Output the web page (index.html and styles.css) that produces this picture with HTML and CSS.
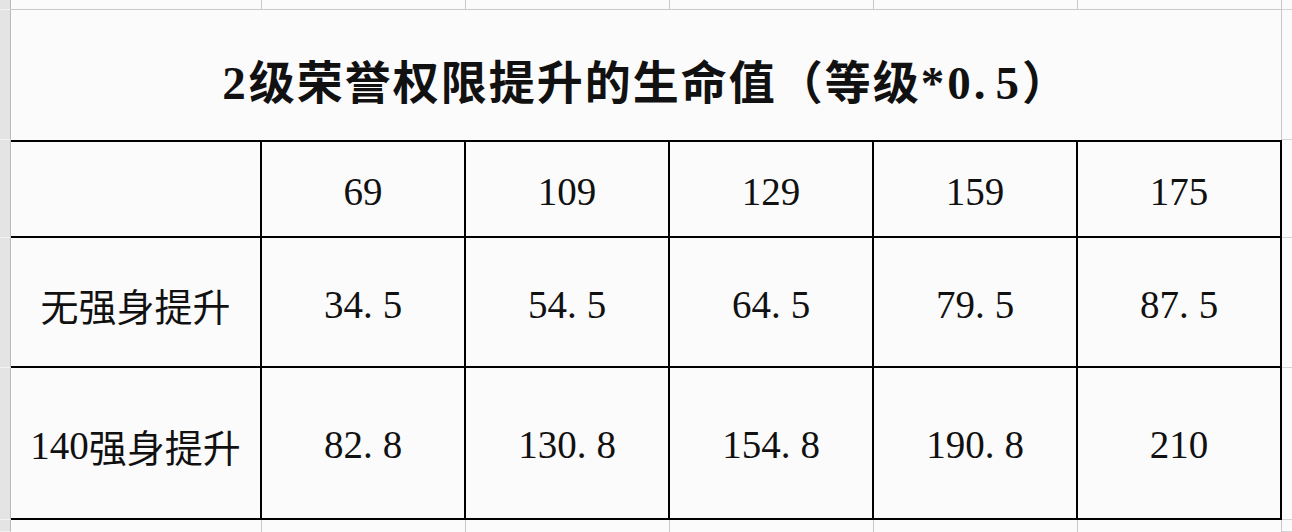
FILE: index.html
```html
<!DOCTYPE html>
<html lang="zh">
<head>
<meta charset="utf-8">
<title>2级荣誉权限提升的生命值</title>
<link rel="stylesheet" href="styles.css">
</head>
<body>
<div class="sheet">
  <!-- top partial row -->
  <div class="hdr edge-top"></div>
  <div class="cell top"></div>
  <div class="cell top"></div>
  <div class="cell top"></div>
  <div class="cell top"></div>
  <div class="cell top"></div>
  <div class="cell top"></div>
  <div class="cell top extra"></div>

  <!-- title row -->
  <div class="hdr"></div>
  <div class="cell title"><span class="cjk"><span class="tlat">2</span>级荣誉权限提升的生命值（等级<span class="tlat">*0<span class="dot">.</span>5</span>）</span></div>
  <div class="cell extra"></div>

  <!-- header numbers -->
  <div class="hdr"></div>
  <div class="cell box hrow first"></div>
  <div class="cell box hrow num">69</div>
  <div class="cell box hrow num">109</div>
  <div class="cell box hrow num">129</div>
  <div class="cell box hrow num">159</div>
  <div class="cell box hrow num">175</div>
  <div class="cell extra"></div>

  <!-- row: 无强身提升 -->
  <div class="hdr"></div>
  <div class="cell box first label">无强身提升</div>
  <div class="cell box num">34<span class="dot">.</span>5</div>
  <div class="cell box num">54<span class="dot">.</span>5</div>
  <div class="cell box num">64<span class="dot">.</span>5</div>
  <div class="cell box num">79<span class="dot">.</span>5</div>
  <div class="cell box num">87<span class="dot">.</span>5</div>
  <div class="cell extra"></div>

  <!-- row: 140强身提升 -->
  <div class="hdr"></div>
  <div class="cell box first label tall"><span class="lat">140</span>强身提升</div>
  <div class="cell box num tall">82<span class="dot">.</span>8</div>
  <div class="cell box num tall">130<span class="dot">.</span>8</div>
  <div class="cell box num tall">154<span class="dot">.</span>8</div>
  <div class="cell box num tall">190<span class="dot">.</span>8</div>
  <div class="cell box num tall">210</div>
  <div class="cell extra"></div>

  <!-- bottom partial row -->
  <div class="hdr"></div>
  <div class="cell bottom"></div>
  <div class="cell bottom"></div>
  <div class="cell bottom"></div>
  <div class="cell bottom"></div>
  <div class="cell bottom"></div>
  <div class="cell bottom"></div>
  <div class="cell bottom extra"></div>
</div>
</body>
</html>
```

FILE: styles.css
```css
* { box-sizing: border-box; }

html, body {
  margin: 0;
  padding: 0;
  background: #fcfbfc;
}

.sheet {
  display: grid;
  grid-template-columns: 11px 251px 204px 204px 204px 204px 204px 10px;
  grid-template-rows: 10px 130px 98px 130px 152px 12px;
  width: 1292px;
  height: 532px;
  overflow: hidden;
  color: #111;
  font-family: "Liberation Serif", "Noto Sans CJK SC", serif;
}

.hdr {
  background: #e4e4e4;
  border-right: 1px solid #b9b9b9;
  border-bottom: 1px solid #f2f2f2;
}

.cell {
  display: flex;
  align-items: center;
  justify-content: center;
  min-width: 0;
}

.top {
  border-right: 1px solid #c9c9c9;
  border-bottom: 1px solid #c9c9c9;
}

.bottom {
  border-right: 1px solid #c9c9c9;
}

.extra {
  border-right: none;
  border-bottom: 1px solid #d4d4d4;
}

.title {
  grid-column: 2 / span 6;
  border-right: 1px solid #c9c9c9;
  padding-top: 8px;
  font-size: 46px;
  font-weight: 700;
  letter-spacing: 2px;
  white-space: nowrap;
}

.cjk {
  font-family: "Noto Sans CJK SC", sans-serif;
}

.tlat {
  font-family: "Liberation Serif", serif;
  font-size: 47px;
  letter-spacing: 3px;
}

.box {
  border-right: 2px solid #000;
  border-bottom: 2px solid #000;
}

.hrow {
  border-top: 2px solid #000;
}

.num {
  font-size: 39px;
  padding-top: 4px;
}

.tall {
  padding-top: 2px;
}

.dot {
  letter-spacing: 10px;
}

.label {
  font-family: "Noto Sans CJK SC", sans-serif;
  font-size: 38px;
  font-weight: 400;
  padding-top: 4px;
}

.lat {
  font-family: "Liberation Serif", serif;
  font-size: 39px;
}
```
